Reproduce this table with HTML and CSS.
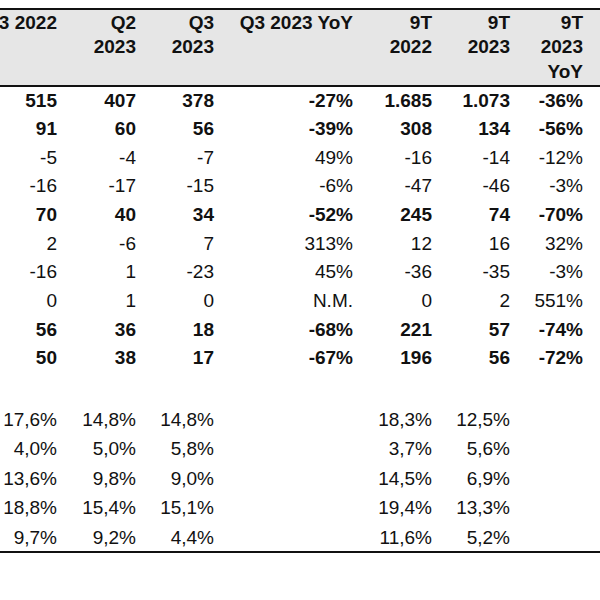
FILE: index.html
```html
<!DOCTYPE html>
<html>
<head>
<meta charset="utf-8">
<link rel="stylesheet" href="styles.css">
</head>
<body>
<div class="table">
  <div class="row head">
    <div>Q3 2022</div><div>Q2<br>2023</div><div>Q3<br>2023</div><div>Q3 2023 YoY</div><div>9T<br>2022</div><div>9T<br>2023</div><div>9T<br>2023<br>YoY</div><div></div>
  </div>
  <div class="row b"><div>515</div><div>407</div><div>378</div><div>-27%</div><div>1.685</div><div>1.073</div><div>-36%</div><div></div></div>
  <div class="row b"><div>91</div><div>60</div><div>56</div><div>-39%</div><div>308</div><div>134</div><div>-56%</div><div></div></div>
  <div class="row"><div>-5</div><div>-4</div><div>-7</div><div>49%</div><div>-16</div><div>-14</div><div>-12%</div><div></div></div>
  <div class="row"><div>-16</div><div>-17</div><div>-15</div><div>-6%</div><div>-47</div><div>-46</div><div>-3%</div><div></div></div>
  <div class="row b"><div>70</div><div>40</div><div>34</div><div>-52%</div><div>245</div><div>74</div><div>-70%</div><div></div></div>
  <div class="row"><div>2</div><div>-6</div><div>7</div><div>313%</div><div>12</div><div>16</div><div>32%</div><div></div></div>
  <div class="row"><div>-16</div><div>1</div><div>-23</div><div>45%</div><div>-36</div><div>-35</div><div>-3%</div><div></div></div>
  <div class="row"><div>0</div><div>1</div><div>0</div><div>N.M.</div><div>0</div><div>2</div><div>551%</div><div></div></div>
  <div class="row b"><div>56</div><div>36</div><div>18</div><div>-68%</div><div>221</div><div>57</div><div>-74%</div><div></div></div>
  <div class="row b"><div>50</div><div>38</div><div>17</div><div>-67%</div><div>196</div><div>56</div><div>-72%</div><div></div></div>
  <div class="spacer"></div>
  <div class="row p"><div>17,6%</div><div>14,8%</div><div>14,8%</div><div></div><div>18,3%</div><div>12,5%</div><div></div><div></div></div>
  <div class="row p"><div>4,0%</div><div>5,0%</div><div>5,8%</div><div></div><div>3,7%</div><div>5,6%</div><div></div><div></div></div>
  <div class="row p"><div>13,6%</div><div>9,8%</div><div>9,0%</div><div></div><div>14,5%</div><div>6,9%</div><div></div><div></div></div>
  <div class="row p"><div>18,8%</div><div>15,4%</div><div>15,1%</div><div></div><div>19,4%</div><div>13,3%</div><div></div><div></div></div>
  <div class="row p last"><div>9,7%</div><div>9,2%</div><div>4,4%</div><div></div><div>11,6%</div><div>5,2%</div><div></div><div></div></div>
</div>
</body>
</html>
```
FILE: styles.css
```css
html, body {
  margin: 0;
  padding: 0;
  background: #fff;
}
body {
  overflow: hidden;
  font-family: "Liberation Sans", Arial, sans-serif;
  font-size: 19px;
  color: #111;
}
.table {
  margin-top: 8px;
  margin-left: -20px;
  width: 620px;
  border-top: 2px solid #111;
  border-bottom: 2px solid #111;
}
.row {
  display: grid;
  grid-template-columns: 81px 79px 78px 139px 79px 78px 73px 1fr;
  height: 28.67px;
  line-height: 28.67px;
}
.row > div {
  text-align: right;
  padding-right: 4px;
  white-space: nowrap;
}
.row.head {
  height: 74px;
  padding-top: 0.5px;
  line-height: 24.5px;
  font-weight: bold;
  background: #e6e6e6;
  border-bottom: 2px solid #111;
}
.row.b {
  font-weight: bold;
}
.spacer {
  height: 31.5px;
}
.row.p {
  height: 29.5px;
  line-height: 29.5px;
}
.row.p.last {
  height: 28px;
  line-height: 30px;
}
```
